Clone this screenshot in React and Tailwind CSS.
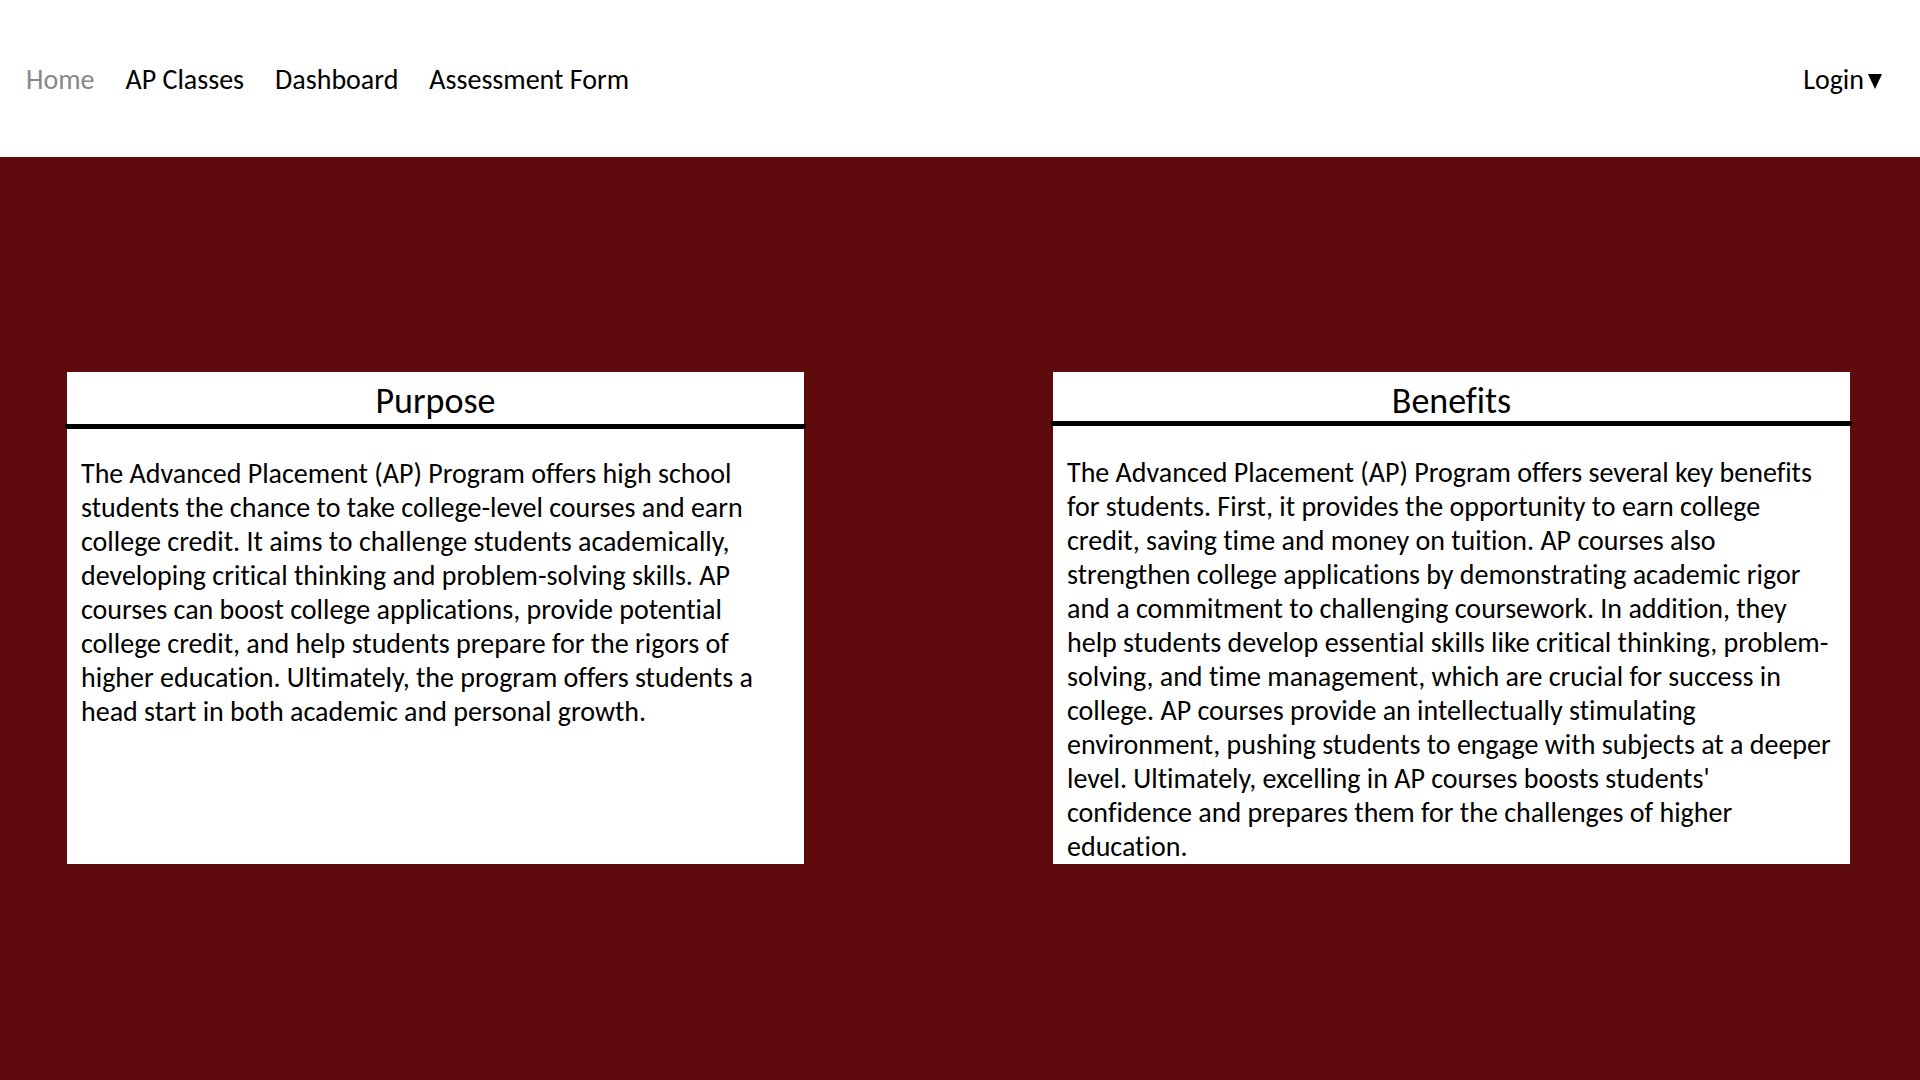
const links = ["Home", "AP Classes", "Dashboard", "Assessment Form"];

const purpose =
  "The Advanced Placement (AP) Program offers high school students the chance to take college-level courses and earn college credit. It aims to challenge students academically, developing critical thinking and problem-solving skills. AP courses can boost college applications, provide potential college credit, and help students prepare for the rigors of higher education. Ultimately, the program offers students a head start in both academic and personal growth.";

const benefits =
  "The Advanced Placement (AP) Program offers several key benefits for students. First, it provides the opportunity to earn college credit, saving time and money on tuition. AP courses also strengthen college applications by demonstrating academic rigor and a commitment to challenging coursework. In addition, they help students develop essential skills like critical thinking, problem-solving, and time management, which are crucial for success in college. AP courses provide an intellectually stimulating environment, pushing students to engage with subjects at a deeper level. Ultimately, excelling in AP courses boosts students' confidence and prepares them for the challenges of higher education.";

function Card({ title, text, titleClass, textClass }) {
  return (
    <section className="min-h-[492px] bg-white">
      <h2 className={"pt-[10px] text-center text-[36px] leading-[39px] " + titleClass}>{title}</h2>
      <hr className="-mx-0.5 h-[5px] border-0 bg-black" />
      <p className={"px-3.5 text-[28px] leading-[34px] " + textClass}>{text}</p>
    </section>
  );
}

export default function App() {
  return (
    <div className="flex min-h-screen flex-col bg-[#5f0a0c] font-[Carlito,Calibri,Lato,sans-serif] text-black [font-variant-ligatures:none]">
      <header className="flex min-h-[157px] items-center justify-between bg-white pt-0.5 pr-[38px] pl-[26px] text-[28px] leading-[34px]">
        <nav className="flex gap-[31px]">
          {links.map((label) => (
            <a key={label} href="#" className={label === "Home" ? "text-[#888888]" : "text-black"}>
              {label}
            </a>
          ))}
        </nav>
        <button type="button" className="flex items-center gap-1">
          Login
          <svg viewBox="0 0 14 15" className="mt-1 h-[15px] w-[14px]" aria-hidden="true">
            <path d="M0 0h14L7 15z" fill="currentColor" />
          </svg>
        </button>
      </header>
      <main className="grid grow grid-cols-[737fr_797fr] items-start gap-x-[249px] pt-[215px] pr-[70px] pb-16 pl-[67px]">
        <Card title="Purpose" text={purpose} titleClass="pb-[3px]" textClass="pt-7" />
        <Card title="Benefits" text={benefits} titleClass="" textClass="pt-[30px]" />
      </main>
    </div>
  );
}
